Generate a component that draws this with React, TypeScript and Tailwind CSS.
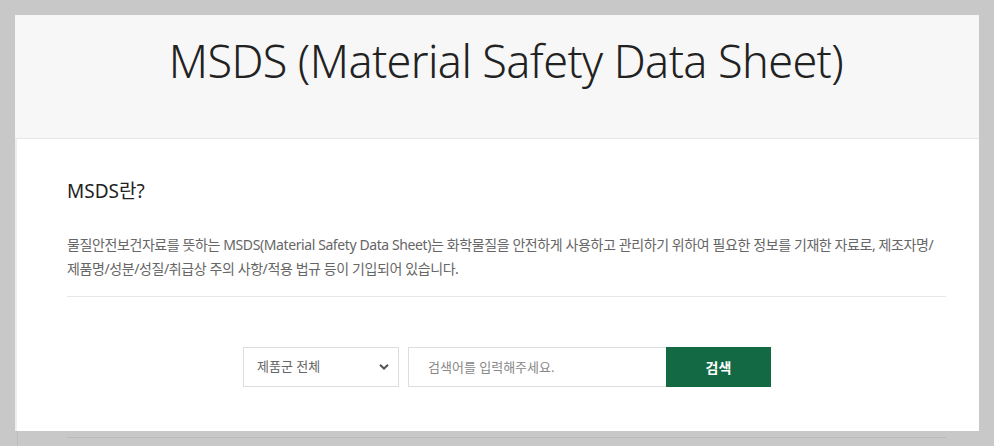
import { useState } from "react";

export default function App() {
    const [keyword, setKeyword] = useState("");
    const [group, setGroup] = useState("all");

    return (
        <div
            className="h-[446px] w-full overflow-hidden bg-[#c8c8c8] pt-[15px] pl-[15px]"
            style={{ fontFamily: '"Noto Sans", "Noto Sans CJK KR", sans-serif' }}
        >
            <div className="w-[964px] bg-white">
                <div className="flex h-[124px] justify-center bg-[#f7f7f7] pl-[18px] pt-[18px] border-b border-[#e6e6e6]">
                    <h1 className="text-[45px] font-light leading-[56px] text-[#222] tracking-[-0.6px]">
                        MSDS (Material Safety Data Sheet)
                    </h1>
                </div>

                <div className="h-[292px] border-l-2 border-[#eeeeee] pl-[50px] pr-[33px] pt-[38px]">
                    <h2 className="text-[19px] font-normal leading-[28px] text-[#222]">MSDS란?</h2>

                    <p className="mt-[28px] pb-[15px] text-[14px] leading-[24px] text-[#666] tracking-[-0.4px] border-b border-[#e6e6e6]">
                        물질안전보건자료를 뜻하는 MSDS(Material Safety Data Sheet)는 화학물질을 안전하게 사용하고 관리하기 위하여 필요한 정보를 기재한 자료로, 제조자명/
                        <br />
                        제품명/성분/성질/취급상 주의 사항/적용 법규 등이 기입되어 있습니다.
                    </p>

                    <div className="mt-[50px] flex justify-center pl-[1px]">
                        <div className="relative w-[156px]">
                            <select
                                value={group}
                                onChange={(e) => setGroup(e.target.value)}
                                className="h-[40px] w-full appearance-none border border-[#dddddd] bg-white pl-[13px] text-[13px] text-[#666] outline-none"
                            >
                                <option value="all">제품군 전체</option>
                                <option value="a">도료</option>
                                <option value="b">접착제</option>
                            </select>
                            <svg
                                className="pointer-events-none absolute right-[10px] top-1/2 -translate-y-1/2"
                                width="10"
                                height="7"
                                viewBox="0 0 10 7"
                            >
                                <path d="M1 1.2 L5 5 L9 1.2" fill="none" stroke="#555" strokeWidth="2" />
                            </svg>
                        </div>

                        <input
                            type="text"
                            value={keyword}
                            onChange={(e) => setKeyword(e.target.value)}
                            placeholder="검색어를 입력해주세요."
                            className="ml-[9px] h-[40px] w-[258px] border border-r-0 border-[#dddddd] pl-[19px] text-[13px] text-[#333] placeholder:text-[#888] outline-none"
                        />

                        <button className="h-[40px] w-[105px] bg-[#126943] text-[14px] font-bold text-white">
                            검색
                        </button>
                    </div>
                </div>
            </div>

            <div className="ml-[2px] flex h-[20px] border-l border-[#bdbdbd]">
                <div className="ml-[49px] mt-[6px] h-px w-[879px] bg-[#b9b9b9]" />
            </div>
        </div>
    );
}
